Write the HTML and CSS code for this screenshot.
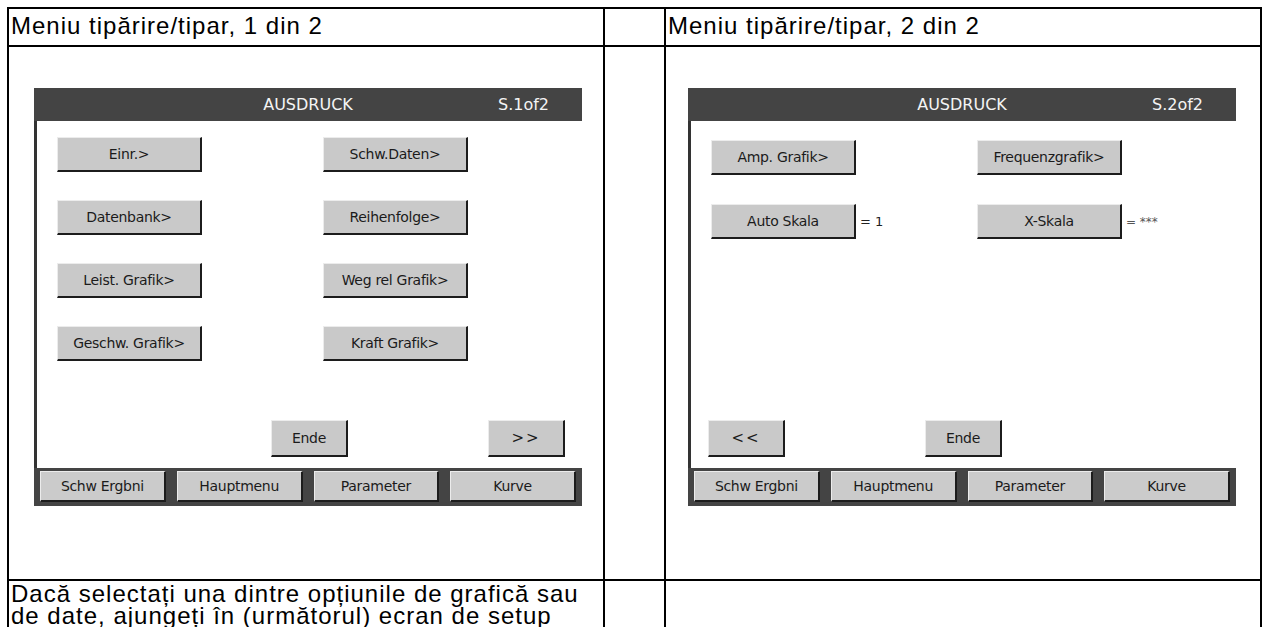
FILE: index.html
```html
<!DOCTYPE html>
<html lang="ro">
<head>
  <meta charset="UTF-8" />
  <title>Meniu tipărire/tipar</title>
  <link rel="stylesheet" href="styles.css">
</head>
<body>
  <table class="sheet">
    <colgroup>
      <col class="col-main" />
      <col class="col-gap" />
      <col class="col-main" />
    </colgroup>
    <tr class="row-head">
      <td>Meniu tipărire/tipar, 1 din 2</td>
      <td></td>
      <td>Meniu tipărire/tipar, 2 din 2</td>
    </tr>
    <tr class="row-shot">
      <td class="shot-left">
        <div class="screen">
          <div class="screen-head">
            <span></span>
            <span class="screen-title">AUSDRUCK</span>
            <span class="screen-page">S.1of2</span>
          </div>
          <div class="screen-body">
            <div class="keys keys-four">
              <div class="key-cell"><span class="key">Einr.&gt;</span></div>
              <div class="key-cell"><span class="key">Schw.Daten&gt;</span></div>
              <div class="key-cell"><span class="key">Datenbank&gt;</span></div>
              <div class="key-cell"><span class="key">Reihenfolge&gt;</span></div>
              <div class="key-cell"><span class="key">Leist. Grafik&gt;</span></div>
              <div class="key-cell"><span class="key">Weg rel Grafik&gt;</span></div>
              <div class="key-cell"><span class="key">Geschw. Grafik&gt;</span></div>
              <div class="key-cell"><span class="key">Kraft Grafik&gt;</span></div>
            </div>
            <div class="screen-foot">
              <span></span>
              <span class="key key-small">Ende</span>
              <span class="key key-small key-arrow">&gt;&gt;</span>
            </div>
          </div>
          <div class="screen-nav">
            <span class="nav-key">Schw Ergbni</span>
            <span class="nav-key">Hauptmenu</span>
            <span class="nav-key">Parameter</span>
            <span class="nav-key">Kurve</span>
          </div>
        </div>
      </td>
      <td></td>
      <td class="shot-right">
        <div class="screen">
          <div class="screen-head">
            <span></span>
            <span class="screen-title">AUSDRUCK</span>
            <span class="screen-page">S.2of2</span>
          </div>
          <div class="screen-body">
            <div class="keys keys-two">
              <div class="key-cell"><span class="key">Amp. Grafik&gt;</span></div>
              <div class="key-cell"><span class="key">Frequenzgrafik&gt;</span></div>
              <div class="key-cell"><span class="key">Auto Skala</span><span class="key-value">= 1</span></div>
              <div class="key-cell"><span class="key">X-Skala</span><span class="key-value stars">= ***</span></div>
            </div>
            <div class="screen-foot">
              <span class="key key-small key-arrow">&lt;&lt;</span>
              <span class="key key-small">Ende</span>
              <span></span>
            </div>
          </div>
          <div class="screen-nav">
            <span class="nav-key">Schw Ergbni</span>
            <span class="nav-key">Hauptmenu</span>
            <span class="nav-key">Parameter</span>
            <span class="nav-key">Kurve</span>
          </div>
        </div>
      </td>
    </tr>
    <tr class="row-note">
      <td>Dacă selectați una dintre opțiunile de grafică sau de date, ajungeți în (următorul) ecran de setup</td>
      <td></td>
      <td></td>
    </tr>
  </table>
</body>
</html>
```

FILE: styles.css
```css
:root {
  --line: #000;
  --lcd-dark: #444;
  --key-bg: #c9c9c9;
  --key-edge: #1c1c1c;
  --key-light: #ececec;
  --key-text: #1b1b1b;
}
html, body { margin: 0; padding: 0; background: #fff; }
body {
  padding: 7px 0 0 7px;
  font-family: "Liberation Sans", Arial, sans-serif;
  color: #000;
}

.sheet {
  border-collapse: collapse;
  table-layout: fixed;
  width: 1253px;
}
.col-main { width: 596px; }
.col-gap { width: 61px; }
.sheet td {
  border: 2px solid var(--line);
  vertical-align: top;
  padding: 0 1px 0 2px;
  font-size: 24px;
  line-height: 22px;
  letter-spacing: 1px;
}
.row-head { height: 38px; }
.row-head td { padding-top: 6px; }
.row-shot { height: 534px; }
.row-note td { padding-top: 2px; }

.shot-left { padding: 41px 0 0 25px !important; }
.shot-right { padding: 41px 0 0 22px !important; }

/* device screenshot */
.screen {
  width: 548px;
  height: 418px;
  display: flex;
  flex-direction: column;
  font-family: "DejaVu Sans", Tahoma, sans-serif;
  letter-spacing: 0;
  line-height: normal;
}
.screen-head {
  height: 33px;
  flex: none;
  background: var(--lcd-dark);
  color: #f4f4f4;
  display: grid;
  grid-template-columns: 1fr auto 1fr;
  align-items: center;
  font-size: 16px;
  line-height: 1;
}
.screen-page { justify-self: end; padding-right: 33px; }

.screen-body {
  flex: 1;
  display: flex;
  flex-direction: column;
  background: #fff;
  border-left: 3px solid #333;
}

.keys {
  display: grid;
  grid-template-columns: 266px auto;
  row-gap: 28px;
  padding: 16px 0 0 20px;
}
.keys-two { padding-top: 19px; row-gap: 29px; }
.key-cell { display: flex; align-items: center; }

.key {
  box-sizing: border-box;
  width: 145px;
  height: 35px;
  display: flex;
  align-items: center;
  justify-content: center;
  background: var(--key-bg);
  border-top: 1px solid var(--key-light);
  border-left: 1px solid var(--key-light);
  border-right: 2px solid var(--key-edge);
  border-bottom: 2px solid var(--key-edge);
  color: var(--key-text);
  font-size: 14px;
  letter-spacing: -0.3px;
}
.key-value {
  margin-left: 4px;
  font-size: 13px;
  color: #222;
}
.key-value.stars { color: #555; font-size: 12px; }

.screen-foot {
  margin-top: auto;
  margin-bottom: 11px;
  display: grid;
  grid-template-columns: 77px 77px 77px;
  justify-content: space-between;
  padding: 0 17px;
}
.key-small { width: 77px; height: 37px; }
.key-arrow { font-size: 15px; letter-spacing: 2px; }

.screen-nav {
  height: 38px;
  flex: none;
  box-sizing: border-box;
  background: var(--lcd-dark);
  display: grid;
  grid-template-columns: repeat(4, 1fr);
  column-gap: 11px;
  padding: 3px 6px 4px 6px;
}
.nav-key {
  display: flex;
  align-items: center;
  justify-content: center;
  background: #cbcbcb;
  border-top: 1px solid var(--key-light);
  border-left: 1px solid var(--key-light);
  border-right: 2px solid var(--key-edge);
  border-bottom: 2px solid var(--key-edge);
  color: var(--key-text);
  font-size: 14px;
  letter-spacing: -0.3px;
}
```
